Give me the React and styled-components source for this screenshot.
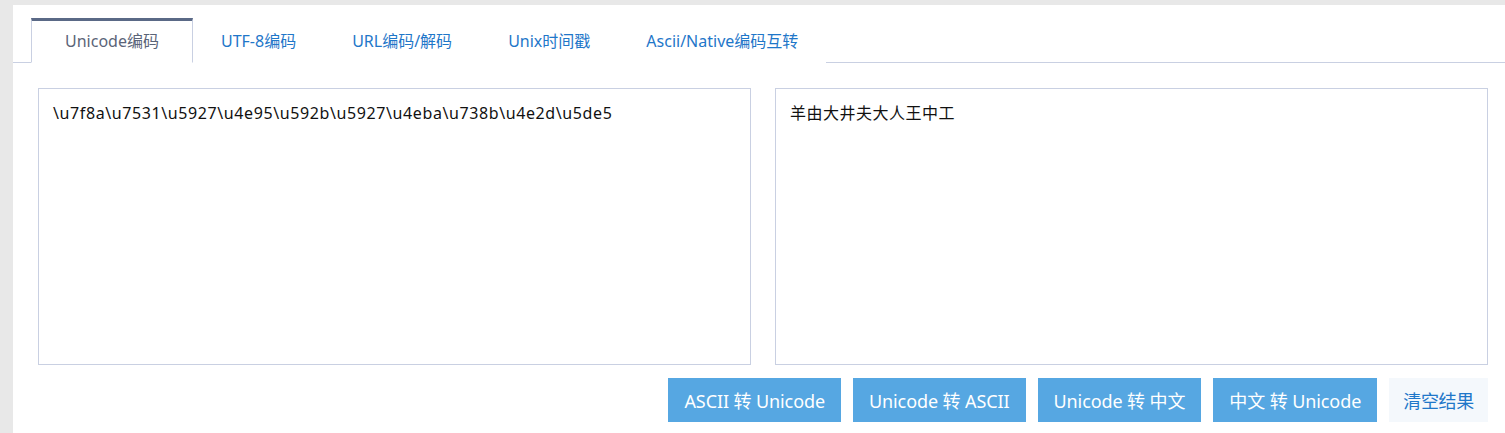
import React from "react";
import styled, { createGlobalStyle } from "styled-components";

const Global = createGlobalStyle`
  html, body { margin: 0; padding: 0; background: #e8e8e8; }
  body { font-family: "Noto Sans", "Noto Sans CJK SC", sans-serif; }
  * { box-sizing: border-box; }
`;

const Panel = styled.div`
  margin: 5px 0 0 13px;
  background: #ffffff;
  min-height: 428px;
`;

const TabBar = styled.div`
  display: flex;
  padding: 13px 0 0 18px;
  border-bottom: 1px solid #c9d0e2;
  height: 58px;
`;

const Tab = styled.div`
  height: 45px;
  margin-bottom: -1px;
  display: flex;
  align-items: center;
  padding: 0 ${(p) => (p.$active ? 33 : 27)}px 4px;
  font-size: 16px;
  color: ${(p) => (p.$active ? "#5b6478" : "#1f77c9")};
  background: #fff;
  border: 1px solid ${(p) => (p.$active ? "#c9d0e2" : "transparent")};
  border-top: ${(p) => (p.$active ? "3px solid #5a6986" : "3px solid transparent")};
  border-bottom: 1px solid ${(p) => (p.$active ? "#ffffff" : "transparent")};
  cursor: pointer;
  white-space: nowrap;
`;

const Body = styled.div`
  padding: 25px 17px 0 25px;
`;

const Editors = styled.div`
  display: grid;
  grid-template-columns: 1fr 1fr;
  gap: 24px;
`;

const Editor = styled.textarea`
  display: block;
  width: 100%;
  height: 277px;
  border: 1px solid #c9d0e2;
  resize: none;
  outline: none;
  padding: 12px 14px;
  font-family: "Noto Sans", "Noto Sans CJK SC", sans-serif;
  font-size: 16px;
  line-height: 24px;
  letter-spacing: ${(p) => (p.$latin ? "0.6px" : "0.5px")};
  color: #111;
  background: #fff;
`;

const Actions = styled.div`
  display: flex;
  justify-content: flex-end;
  gap: 12px;
  margin-top: 13px;
`;

const Button = styled.button`
  height: 44px;
  padding: 0 ${(p) => (p.$light ? 14 : 16)}px;
  border: none;
  font-family: "Noto Sans", "Noto Sans CJK SC", sans-serif;
  font-size: 18px;
  letter-spacing: ${(p) => (p.$light ? "-0.3px" : "-0.1px")};
  color: ${(p) => (p.$light ? "#1f77c9" : "#ffffff")};
  background: ${(p) => (p.$light ? "#f4f8fc" : "#56a7e2")};
  cursor: pointer;
  white-space: nowrap;
`;

const tabs = ["Unicode编码", "UTF-8编码", "URL编码/解码", "Unix时间戳", "Ascii/Native编码互转"];

export default function App() {
  return (
    <>
      <Global />
      <Panel>
        <TabBar>
          {tabs.map((t, i) => (
            <Tab key={t} $active={i === 0}>{t}</Tab>
          ))}
        </TabBar>
        <Body>
          <Editors>
            <Editor $latin defaultValue={"\\u7f8a\\u7531\\u5927\\u4e95\\u592b\\u5927\\u4eba\\u738b\\u4e2d\\u5de5"} />
            <Editor defaultValue={"羊由大井夫大人王中工"} />
          </Editors>
          <Actions>
            <Button>ASCII 转 Unicode</Button>
            <Button>Unicode 转 ASCII</Button>
            <Button>Unicode 转 中文</Button>
            <Button>中文 转 Unicode</Button>
            <Button $light>清空结果</Button>
          </Actions>
        </Body>
      </Panel>
    </>
  );
}
